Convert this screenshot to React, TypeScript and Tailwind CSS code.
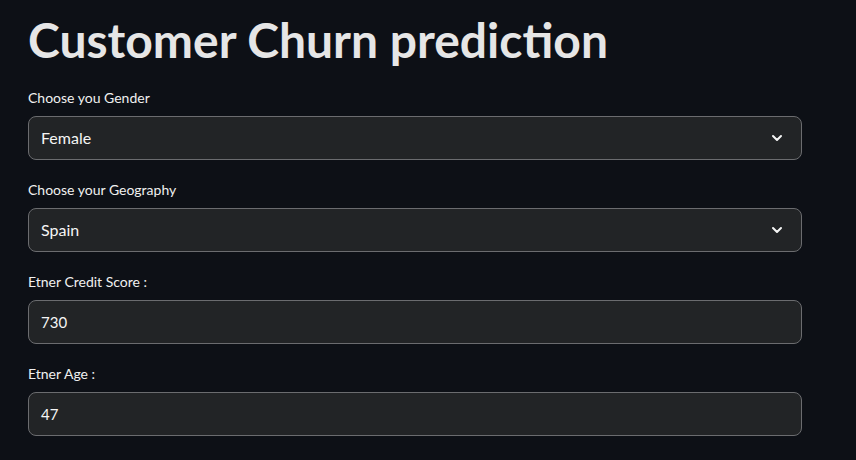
import { ChevronDown } from "lucide-react";

const font = { fontFamily: '"Source Sans Pro", Lato, "Noto Sans", sans-serif' };

const Field = ({ label, value, select }: { label: string; value: string; select?: boolean }) => (
  <div className="flex flex-col">
    <label className="h-5 text-[14px] leading-5 text-[#f0f0f0]">{label}</label>
    <div className="mt-2 flex h-11 items-center justify-between rounded-lg border border-[#6b6c6f] bg-[#222426] pl-3 pr-4">
      <span className={select ? "text-[16px] text-[#f5f5f5]" : "text-[15px] text-[#f5f5f5]"}>{value}</span>
      {select && <ChevronDown className="h-4 w-4 text-[#f5f5f5]" strokeWidth={3} />}
    </div>
  </div>
);

export default function App() {
  return (
    <div className="min-h-[460px] w-full bg-[#0d1016]" style={font}>
      <div className="w-[802px] pl-7">
        <h1 className="pt-3 text-[48px] font-bold leading-[56px] text-[#e6e6e6]">Customer Churn prediction</h1>
        <div className="mt-5 flex flex-col gap-5">
          <Field label="Choose you Gender" value="Female" select />
          <Field label="Choose your Geography" value="Spain" select />
          <Field label="Etner Credit Score :" value="730" />
          <Field label="Etner Age :" value="47" />
        </div>
      </div>
    </div>
  );
}
